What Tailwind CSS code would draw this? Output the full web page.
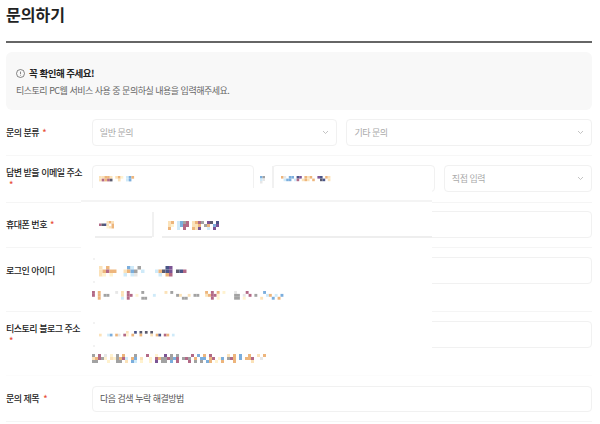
<!DOCTYPE html>
<html lang="ko">
<head>
    <meta charset="UTF-8">
    <title>문의하기</title>
    <script src="https://cdn.jsdelivr.net/npm/@tailwindcss/browser@4"></script>
</head>
<body class="bg-white overflow-hidden font-['Noto_Sans_CJK_KR','Noto_Sans',sans-serif]">
    <div class="relative w-[600px] h-[424px] overflow-hidden">
        <div class="pl-[6px] w-[592px]">
            <h1 class="h-[41px] pt-[2px] text-[16px] leading-[24px] font-bold text-[#222]">문의하기</h1>
            <div class="h-[2px] bg-[#666]"></div>

            <div class="mt-[9px] h-[58px] rounded-[6px] bg-[#f8f8f8] px-[10px] pt-[14px]">
                <div class="flex items-center gap-[4px] h-[14px] text-[9.5px] tracking-[-0.5px] font-bold text-[#222]">
                    <svg width="9" height="9" viewBox="0 0 9 9" fill="none" stroke="#555" stroke-width="0.7"><circle cx="4.5" cy="4.5" r="4"/><path d="M4.5 2.6v2.6M4.5 6v.6"/></svg>
                    <span>꼭 확인해 주세요!</span>
                </div>
                <p class="mt-[4px] text-[9px] tracking-[-0.5px] leading-[14px] text-[#666]">티스토리 PC웹 서비스 사용 중 문의하실 내용을 입력해주세요.</p>
            </div>

            <!-- 문의 분류 -->
            <div class="flex pt-[9px] pb-[9px] border-b border-[#f7f7f7]">
                <div class="w-[86px] h-[27px] flex items-center text-[9px] tracking-[-0.5px] leading-[12px] font-medium text-[#222]"><span class="max-w-[78px]">문의 분류<span class="inline-block pl-[3px] text-[#e8503a]">*</span></span></div>
                <div class="flex gap-[9px] w-[501px]">
                    <div class="flex-1 h-[27px] px-[7px] flex items-center justify-between border border-[#f1f1f1] rounded-[4px] text-[9px] tracking-[-0.5px] text-[#aaa]">
                        <span>일반 문의</span>
                        <svg width="7" height="5" viewBox="0 0 7 5" fill="none" stroke="#aaa" stroke-width="0.7"><path d="M1 1l2.5 2.5L6 1"/></svg>
                    </div>
                    <div class="flex-1 h-[27px] px-[7px] flex items-center justify-between border border-[#f1f1f1] rounded-[4px] text-[9px] tracking-[-0.5px] text-[#aaa]">
                        <span>기타 문의</span>
                        <svg width="7" height="5" viewBox="0 0 7 5" fill="none" stroke="#aaa" stroke-width="0.7"><path d="M1 1l2.5 2.5L6 1"/></svg>
                    </div>
                </div>
            </div>

            <!-- 답변 받을 이메일 주소 -->
            <div class="flex pt-[9px] pb-[10px] border-b border-[#f5f5f5]">
                <div class="w-[86px] h-[27px] flex items-center text-[9px] tracking-[-0.5px] leading-[12px] font-medium text-[#222]"><span class="max-w-[78px]">답변 받을 이메일 주소<span class="inline-block pl-[3px] text-[#e8503a]">*</span></span></div>
                <div class="flex w-[501px]">
                    <div class="w-[162px] h-[27px] border border-[#f1f1f1] rounded-[4px]"></div>
                    <div class="w-[18px]"></div>
                    <div class="w-[163px] h-[27px] border border-[#f1f1f1] rounded-[4px]"></div>
                    <div class="ml-[9px] flex-1 h-[27px] px-[7px] flex items-center justify-between border border-[#f1f1f1] rounded-[4px] text-[9px] tracking-[-0.5px] text-[#aaa]">
                        <span>직접 입력</span>
                        <svg width="7" height="5" viewBox="0 0 7 5" fill="none" stroke="#aaa" stroke-width="0.7"><path d="M1 1l2.5 2.5L6 1"/></svg>
                    </div>
                </div>
            </div>

            <!-- 휴대폰 번호 -->
            <div class="flex pt-[8px] pb-[9px] border-b border-[#f5f5f5]">
                <div class="w-[86px] h-[27px] flex items-center text-[9px] tracking-[-0.5px] leading-[12px] font-medium text-[#222]"><span class="max-w-[78px]">휴대폰 번호<span class="inline-block pl-[3px] text-[#e8503a]">*</span></span></div>
                <div class="w-[500px] h-[27px] border border-[#f1f1f1] rounded-[4px]"></div>
            </div>

            <!-- 로그인 아이디 -->
            <div class="flex pt-[9px] pb-[9px] border-b border-[#f5f5f5]">
                <div class="w-[86px] h-[27px] flex items-center text-[9px] tracking-[-0.5px] leading-[12px] font-medium text-[#222]">로그인 아이디</div>
                <div class="w-[500px]">
                    <div class="h-[27px] border border-[#f1f1f1] rounded-[4px]"></div>
                    <div class="h-[18px]"></div>
                </div>
            </div>

            <!-- 티스토리 블로그 주소 -->
            <div class="flex pt-[9px] pb-[9px] border-b border-[#fcfcfc]">
                <div class="w-[86px] h-[27px] flex items-center text-[9px] tracking-[-0.5px] leading-[12px] font-medium text-[#222]"><span class="max-w-[78px]">티스토리 블로그 주소<span class="inline-block pl-[3px] text-[#e8503a]">*</span></span></div>
                <div class="w-[500px]">
                    <div class="h-[27px] border border-[#f1f1f1] rounded-[4px]"></div>
                    <div class="h-[18px]"></div>
                </div>
            </div>

            <!-- 문의 제목 -->
            <div class="flex pt-[10px] pb-[9px] border-b border-[#f5f5f5]">
                <div class="w-[86px] h-[26px] flex items-center text-[9px] tracking-[-0.5px] leading-[12px] font-medium text-[#222]"><span class="max-w-[78px]">문의 제목<span class="inline-block pl-[4px] text-[#e8503a]">*</span></span></div>
                <div class="w-[500px] h-[26px] px-[7px] flex items-center border border-[#f1f1f1] rounded-[4px] text-[9px] tracking-[-0.5px] text-[#555]">다음 검색 누락 해결방법</div>
            </div>
        </div>

        <!-- 가림 영역 -->
        <div class="absolute left-[92px] top-[188px] w-[340px] h-[12px] bg-white"></div>
        <div class="absolute left-[81px] top-[200px] w-[351px] h-[2px] bg-[#f4f4f4]"></div>
        <div class="absolute left-[81px] top-[202px] w-[351px] h-[173px] bg-white"></div>
        <div class="absolute left-[272px] top-[166px] w-[2px] h-[22px] bg-[#f1f1f1]"></div>
        <div class="absolute left-[152px] top-[212px] w-[2px] h-[25px] bg-[#f1f1f1]"></div>
        <div class="absolute left-[95px] top-[236px] w-[57px] h-[2px] bg-[#eeeeee]"></div>
        <div class="absolute left-[162px] top-[236px] w-[270px] h-[2px] bg-[#eeeeee]"></div>
        <svg id="mosaic" class="absolute left-0 top-0 blur-[0.5px] opacity-80" width="600" height="424"></svg>
    </div>

    <script>
        const palette = {
            o: '#fbdca8', b: '#e9a35c', u: '#5b9bd5', l: '#c4e6f8', p: '#5b2a7a', d: '#33334a',
            g: '#8c8c8c', r: '#a04468', n: '#1d2a6a', y: '#fff0c4', s: '#e2e2e2'
        };
        // [x, y, 칸 크기, 줄들]
        const blocks = [
            [99, 176, 2.7, ['oobbo.oby.lub', 'orbrd..o..lu.']],
            [260, 176, 2.5, ['ug', 'ls', 's.']],
            [281, 176, 2.6, ['bs.uu.np.bob..pn.bo', '.luu.lr.obo.b..dn.o']],
            [99, 221, 2.5, ['...obo', 'rdno.b', '...yob']],
            [168, 221, 3, ['ob.lugr.obrg.pd.n', 'oy.lurr.oob.gb.up', 'b..l.r..bop..l.p.']],
            [99, 266, 3.5, ['o.b.....ul.g.......np.....', 'obrbb..obug.l...lbdnp.dnr.', 'oy.y...l.ls......l.br.....']],
            [92, 291, 2.9, ['r.b.....s.o.r....g.......o.g...........b.r.b.y...s...r.....u.......', 'r.b.gg....o.rr.y.....l.......go..o.gg..obrry.....gg.s.r.g...lb.l.u.', '..b.......l.r....gg............gg........r.y.....gg.y.....o...u.b..']],
            [99, 331, 2.7, ['..........o..n.d.d.d........', 'o..lu.bs.ry.b..b...o.bn.rb.l']],
            [92, 354, 3, ['g.r.s.y.g.b...g...r..y..p.g.g....r.u.b.r.....o.b.u..b..o.b.', 'obrgy.oygbrl.bu.o..y.rbggrgur.grg.b.uu.br.yu.grb.u.bbr..s', 'gg...y..gg.o.ul.y..y.p.gg.u.r...r.g.g.ub.y.b...b.....o...']]
        ];
        const svg = document.getElementById('mosaic');
        blocks.forEach(([x, y, size, rows]) => {
            rows.forEach((row, j) => {
                [...row].forEach((c, i) => {
                    if (!palette[c]) return;
                    const rect = document.createElementNS('http://www.w3.org/2000/svg', 'rect');
                    rect.setAttribute('x', x + i * size);
                    rect.setAttribute('y', y + j * size);
                    rect.setAttribute('width', size);
                    rect.setAttribute('height', size);
                    rect.setAttribute('fill', palette[c]);
                    svg.appendChild(rect);
                });
            });
        });
        // 가림 자국
        [[93, 258], [93, 281], [93, 322], [93, 345]].forEach(([x, y]) => {
            const rect = document.createElementNS('http://www.w3.org/2000/svg', 'rect');
            rect.setAttribute('x', x);
            rect.setAttribute('y', y);
            rect.setAttribute('width', 2);
            rect.setAttribute('height', 2);
            rect.setAttribute('fill', '#f0f0f0');
            svg.appendChild(rect);
        });
    </script>
</body>
</html>
